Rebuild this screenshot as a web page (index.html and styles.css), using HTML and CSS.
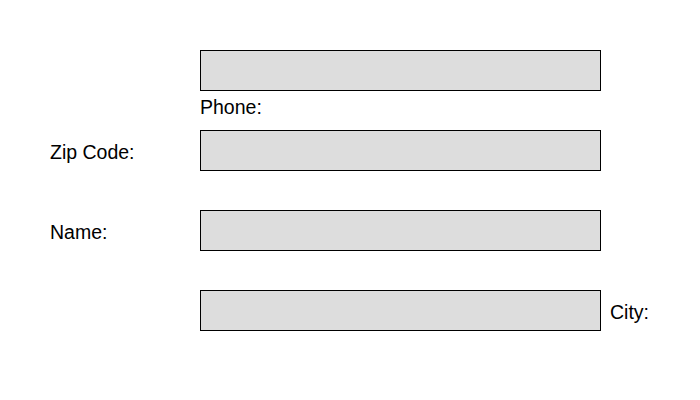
FILE: index.html
```html
<!DOCTYPE html>
<html>
<head>
<meta charset="utf-8">
<link rel="stylesheet" href="styles.css">
</head>
<body>
<form class="form">
  <div class="row">
    <div class="label-col"></div>
    <div class="stack">
      <input class="field" type="text">
      <label class="label below">Phone:</label>
    </div>
  </div>
  <div class="row">
    <label class="label label-col">Zip Code:</label>
    <input class="field" type="text">
  </div>
  <div class="row">
    <label class="label label-col">Name:</label>
    <input class="field" type="text">
  </div>
  <div class="row">
    <div class="label-col"></div>
    <input class="field" type="text">
    <label class="label after">City:</label>
  </div>
</form>
</body>
</html>
```

FILE: styles.css
```css
html, body {
  margin: 0;
  padding: 0;
  background: #ffffff;
}
body {
  width: 700px;
  height: 400px;
  font-family: "Liberation Sans", Arial, sans-serif;
  font-size: 20px;
  color: #000000;
}
.form {
  padding: 50px 0 0 50px;
  display: flex;
  flex-direction: column;
}
.row {
  display: flex;
  align-items: center;
  height: 41px;
  margin-bottom: 39px;
}
.row:first-child {
  align-items: flex-start;
}
.label-col {
  width: 150px;
  flex: none;
}
.stack {
  display: flex;
  flex-direction: column;
}
.field {
  box-sizing: border-box;
  width: 401px;
  height: 41px;
  margin: 0;
  padding: 0;
  border: 1px solid #000000;
  background: #dddddd;
  flex: none;
}
.label {
  font-size: 19.5px;
  line-height: 23px;
  padding-top: 3px;
}
.below {
  padding-top: 5px;
}
.after {
  margin-left: 9px;
}
```
